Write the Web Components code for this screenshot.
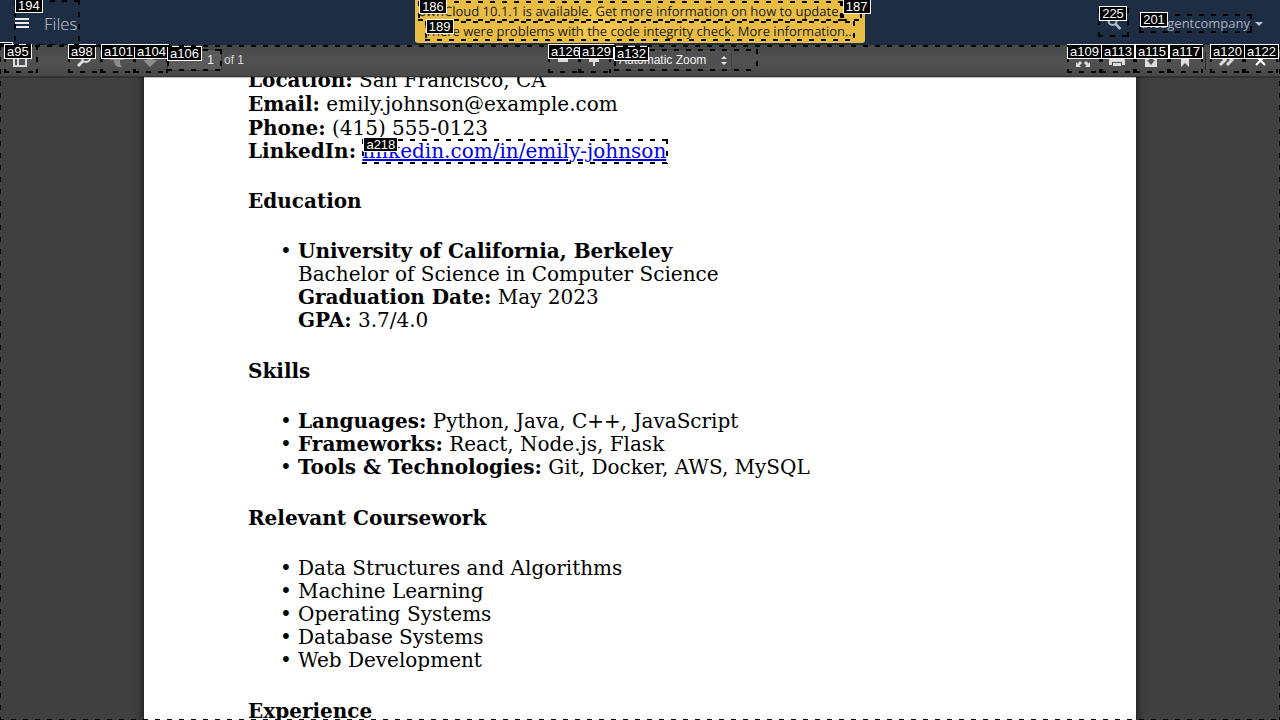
<!DOCTYPE html>
<html lang="en">
<head>
<meta charset="utf-8">
<title>Files - ownCloud</title>
<style>
html,body{height:100%}
body{margin:0;overflow:hidden}
</style>
</head>
<body>
<files-app></files-app>
<script>
const define = (name, html) => {
  const t = document.createElement('template');
  t.innerHTML = html;
  customElements.define(name, class extends HTMLElement {
    constructor() {
      super();
      this.attachShadow({mode: 'open'}).append(t.content.cloneNode(true));
    }
    connectedCallback() {
      const out = this.shadowRoot.querySelector('[data-label]');
      if (out) out.textContent = this.getAttribute('label') || '';
    }
  });
};

/* Widely spaced dashes along the four edges of a box. */
const dashes = `
 --h:repeating-linear-gradient(90deg,#000 0 5px,transparent 5px 12px);
 --v:repeating-linear-gradient(#000 0 5px,transparent 5px 12px);
 background:var(--h) top/100% 2px,var(--h) bottom/100% 2px,var(--v) left/2px 100%,var(--v) right/2px 100%;
 background-repeat:no-repeat;pointer-events:none;`;

/* Dashed outline with a numbered tag around whatever is slotted in. */
define('hint-mark', `
<style>
:host{display:block;position:relative}
.box{position:absolute;inset:var(--grow,0);z-index:4;${dashes}}
.tag{position:absolute;left:var(--tag-left,0);top:var(--tag-top,-2px);z-index:5;box-sizing:border-box;height:15px;
 padding:0 2px;border:1px solid #fff;background:#000;color:#fff;font:13px/13px "Liberation Sans",Arial,sans-serif;white-space:nowrap;pointer-events:none}
</style>
<slot></slot><div class="box"></div><span class="tag" data-label></span>`);

define('tool-button', `
<style>
:host{display:block}
button{display:block;width:var(--button-width,34px);height:28px;padding:0 2px 0 0;border:0;background:none;color:#dcdcdc}
::slotted(svg){display:block;margin:2px auto 0}
:host([disabled]) button{color:#8d8d8d}
</style>
<button type="button"><slot></slot></button>`);

define('update-notice', `
<style>
:host{display:block;position:relative;box-sizing:border-box;width:450px;height:43px;padding-top:1px;background:#e9bc44;border-radius:0 0 3px 3px;
 font:13px/20px "Open Sans",sans-serif;color:#1c1c1c;text-rendering:geometricPrecision}
.logo{position:absolute;left:159px;top:6px}
.row{display:flex;justify-content:center;position:relative}
hint-mark{height:20px;white-space:nowrap}
a{color:inherit;text-decoration:none}
button{display:block;width:20px;height:18px;padding:0;border:0;background:none}
</style>
<svg class="logo" width="140" height="36" viewBox="0 0 140 36" aria-hidden="true">
<g fill="#f4c64c"><circle cx="24" cy="13" r="12"/><circle cx="10" cy="25" r="8"/><circle cx="35" cy="23" r="11"/><circle cx="22" cy="25" r="9"/></g>
<g fill="none" stroke="#e9bc44"><circle cx="24" cy="13" r="8"/><circle cx="36" cy="23" r="7"/></g>
<text x="64" y="22" font-size="18" font-weight="300" fill="#efc658">ownCloud</text></svg>
<div class="row"><hint-mark label="186"><a href="#">ownCloud 10.1.1 is available. Get more information on how to update.</a></hint-mark>
<hint-mark label="187"><button type="button" aria-label="Dismiss"></button></hint-mark></div>
<div class="row"><hint-mark label="189"><a href="#">There were problems with the code integrity check. More information…</a></hint-mark></div>`);

define('app-header', `
<style>
:host{display:grid;grid-template-columns:1fr auto 1fr;height:45px;background:#1d2d44;color:#c3c8ce;font-family:"Open Sans",sans-serif;overflow:hidden;--tag-left:1px}
.left{padding-left:14px;display:flex;align-items:flex-start}
.menu{display:flex;align-items:center;gap:14px;height:46px;color:inherit;text-decoration:none;font-size:17px;font-weight:300;padding-right:2px}
.right{display:flex;justify-content:flex-end;align-items:flex-start;padding-right:17px}
.search{margin:8px 10px 0 0}
.search button{display:block;width:31px;height:29px;border:0;padding:0;background:none;color:#b4bcc7}
.user{margin-top:14px}
.user a{display:block;height:19px;padding:0 2px 0 1px;color:#aab1bb;text-decoration:none;font-size:13px;line-height:19px}
.caret{margin:22px 0 0 3px;border:4px solid transparent;border-top-color:#bcc2ca;border-bottom:0}
svg{display:block}
button svg{margin:auto}
</style>
<div class="left"><hint-mark label="194"><a class="menu" href="#">
<svg width="16" height="12" viewBox="0 0 16 12" fill="#e8eaec"><path d="M1 1h14v2H1zM1 5h14v2H1zM1 9h14v2H1z"/></svg><span>Files</span></a></hint-mark></div>
<update-notice></update-notice>
<div class="right"><hint-mark class="search" label="225"><button type="button" aria-label="Search"><svg width="16" height="16" viewBox="0 0 16 16" fill="none" stroke="currentColor"><circle cx="6.5" cy="6" r="4" stroke-width="2"/><path d="M9.5 9l5 5" stroke-width="2.5"/></svg></button></hint-mark>
<hint-mark class="user" label="201"><a href="#">theagentcompany</a></hint-mark><span class="caret"></span></div>`);

define('pdf-toolbar', `
<style>
:host{display:grid;grid-template-columns:1fr auto 1fr;box-sizing:border-box;height:32px;position:relative;z-index:2;
 background:linear-gradient(#474747,#525252 50%,#484848);border-bottom:1px solid #333;box-shadow:0 1px 0 rgba(0,0,0,.25);
 color:#d9d9d9;font:12px/20px "Liberation Sans",Arial,sans-serif;--tag-top:-1px}
div{display:flex;align-items:flex-start}
.left{padding-left:4px}
.find{margin-left:30px}
.tight{margin-right:-1px}
.center{--button-width:32px}
.wide{margin-right:3px}
.right{justify-content:flex-end;padding-right:2px}
.sep{width:1px;height:18px;margin:7px 4px 0 2px;background:#2b2b2b}
.field{margin-top:4px;--tag-top:-3px}
input,select{display:block;box-sizing:border-box;height:22px;margin:0;border:1px solid #3a3a3a;border-radius:2px;background:#5b5b5b;color:#f2f2f2;font:12px/18px "Liberation Sans",Arial,sans-serif}
input{width:55px;padding:0 7px;text-align:right}
.of{margin:5px 0 0 2px}
.zoom{--grow:0 -26px 0 0}
select{width:118px;appearance:none;padding:0 4px;background:#505050;border-color:#424242}
.arrows{position:absolute;right:4px;top:7px}
</style>
<div class="left">
<hint-mark label="a95"><tool-button><svg width="16" height="16" viewBox="0 0 16 16" fill="none" stroke="currentColor" stroke-width="2"><path d="M2 2h12v12H2zM6 2v12M2 3h12"/></svg></tool-button></hint-mark>
<hint-mark class="find tight" label="a98"><tool-button><svg width="16" height="16" viewBox="0 0 16 16" fill="none" stroke="currentColor"><circle cx="10" cy="6" r="4" stroke-width="2"/><path d="M7 9l-5 5" stroke-width="3"/></svg></tool-button></hint-mark>
<hint-mark class="tight" label="a101"><tool-button disabled><svg width="16" height="16" viewBox="0 0 16 16" fill="currentColor"><path d="M8 0l7 8h-4c0 3 0 5 2 7-5 1-8-2-8-7H1z"/></svg></tool-button></hint-mark>
<hint-mark class="tight" label="a104"><tool-button disabled><svg width="16" height="16" viewBox="0 0 16 16" fill="currentColor"><path d="M8 15L1 8h4c0-3 0-5-2-7 5-1 8 2 8 7h4z"/></svg></tool-button></hint-mark>
<hint-mark class="field" label="a106"><input aria-label="Page" value="1"></hint-mark><span class="of">of 1</span>
</div>
<div class="center">
<hint-mark class="tight" label="a126"><tool-button><svg width="16" height="16" viewBox="0 0 16 16" fill="currentColor"><path d="M3 7h10v3H3z"/></svg></tool-button></hint-mark>
<hint-mark class="wide" label="a129"><tool-button><svg width="16" height="16" viewBox="0 0 16 16" fill="currentColor"><path d="M7 3h2v4h4v3H9v4H7v-4H3V7h4z"/></svg></tool-button></hint-mark>
<hint-mark class="field zoom" label="a132"><select aria-label="Zoom"><option>Automatic Zoom</option></select>
<svg class="arrows" width="8" height="9" viewBox="0 0 8 9" fill="#e4e4e4"><path d="M4 0l3 3H1zM4 9L1 6h6z"/></svg></hint-mark>
</div>
<div class="right">
<hint-mark label="a109"><tool-button><svg width="16" height="16" viewBox="0 0 16 16" fill="currentColor"><path d="M1 1h5L4.500 2.500 7 5 5 7 2.500 4.500 1 6zM15 1v5l-1.500-1.500L11 7 9 5l2.500-2.500L10 1zM1 15v-5l1.500 1.500L5 9l2 2-2.500 2.500L6 15zM15 15h-5l1.500-1.500L9 11l2-2 2.500 2.500L15 10z"/></svg></tool-button></hint-mark>
<hint-mark label="a113"><tool-button><svg width="16" height="16" viewBox="0 0 16 16" fill="currentColor"><path d="M3 1h10v4H3zM1 6h14l1 2v5h-3v-3H3v3H0V8zM4 11h8v3H4z"/></svg></tool-button></hint-mark>
<hint-mark label="a115"><tool-button><svg width="16" height="16" viewBox="0 0 16 16" fill="currentColor" fill-rule="evenodd"><path d="M2 2h12v13H2zM6 4v4H4l4 5 4-5h-2V4z"/></svg></tool-button></hint-mark>
<hint-mark label="a117"><tool-button><svg width="16" height="16" viewBox="0 0 16 16" fill="currentColor"><path d="M4 1h8v14l-4-4-4 4z"/></svg></tool-button></hint-mark>
<span class="sep"></span>
<hint-mark label="a120"><tool-button><svg width="16" height="16" viewBox="0 0 16 16" fill="none" stroke="currentColor" stroke-width="3"><path d="M2 3l5 5-5 5M9 3l5 5-5 5"/></svg></tool-button></hint-mark>
<hint-mark label="a122"><tool-button><svg width="16" height="16" viewBox="0 0 16 16" fill="none" stroke="#fff" stroke-width="2"><path d="M4 4l9 9M13 4l-9 9"/></svg></tool-button></hint-mark>
</div>`);

define('resume-section', `
<style>
:host{display:block;margin-bottom:28px}
h2{margin:0 0 27px;font:inherit;font-weight:bold}
</style><h2 data-label></h2><slot></slot>`);

define('bullet-item', `
<style>
:host{display:flex;margin-left:32px}
i{width:18px;flex:none;font-style:normal}
</style><i>•</i><div><slot></slot></div>`);

define('resume-page', `
<style>
:host{display:block;box-sizing:border-box;max-width:992px;min-height:760px;margin:-8px auto 0;padding-left:104px;background:#fff;color:#000;
 box-shadow:0 0 8px 2px rgba(0,0,0,.55);font:20px/23px "DejaVu Serif",serif}
header{margin-bottom:27px}
p{margin:0}
p + p{margin-top:1px}
p:last-child{margin-top:0}
hint-mark{display:inline-block;--grow:-1px -2px -1px 0;--tag-left:1px;--tag-top:-3px}
a{color:#00e}
</style>
<header><p><b>Location:</b> San Francisco, CA</p><p><b>Email:</b> emily.johnson@example.com</p><p><b>Phone:</b> (415) 555-0123</p>
<p><b>LinkedIn:</b> <hint-mark label="a218"><a href="#">linkedin.com/in/emily-johnson</a></hint-mark></p></header>
<resume-section label="Education"><bullet-item><b>University of California, Berkeley</b><br>Bachelor of Science in Computer Science<br><b>Graduation Date:</b> May 2023<br><b>GPA:</b> 3.7/4.0</bullet-item></resume-section>
<resume-section label="Skills"><bullet-item><b>Languages:</b> Python, Java, C++, JavaScript</bullet-item><bullet-item><b>Frameworks:</b> React, Node.js, Flask</bullet-item><bullet-item><b>Tools &amp; Technologies:</b> Git, Docker, AWS, MySQL</bullet-item></resume-section>
<resume-section label="Relevant Coursework"><bullet-item>Data Structures and Algorithms</bullet-item><bullet-item>Machine Learning</bullet-item><bullet-item>Operating Systems</bullet-item><bullet-item>Database Systems</bullet-item><bullet-item>Web Development</bullet-item></resume-section>
<resume-section label="Experience"></resume-section>`);

define('pdf-viewer', `
<style>
:host{display:flex;flex-direction:column;flex:1;min-height:0;position:relative;background:#404040}
main{flex:1;min-height:0;overflow:hidden}
.frame{position:absolute;inset:0 -1px -1px;z-index:3;${dashes}}
.corner{position:absolute;left:-1px;top:-3px;z-index:1;box-sizing:border-box;width:14px;height:13px;border:1px solid #fff;background:#000}
</style>
<span class="corner"></span><pdf-toolbar></pdf-toolbar><main><resume-page></resume-page></main><div class="frame"></div>`);

define('files-app', `
<style>:host{display:flex;flex-direction:column;height:100vh;overflow:hidden}</style>
<app-header></app-header><pdf-viewer></pdf-viewer>`);
</script>
</body>
</html>
